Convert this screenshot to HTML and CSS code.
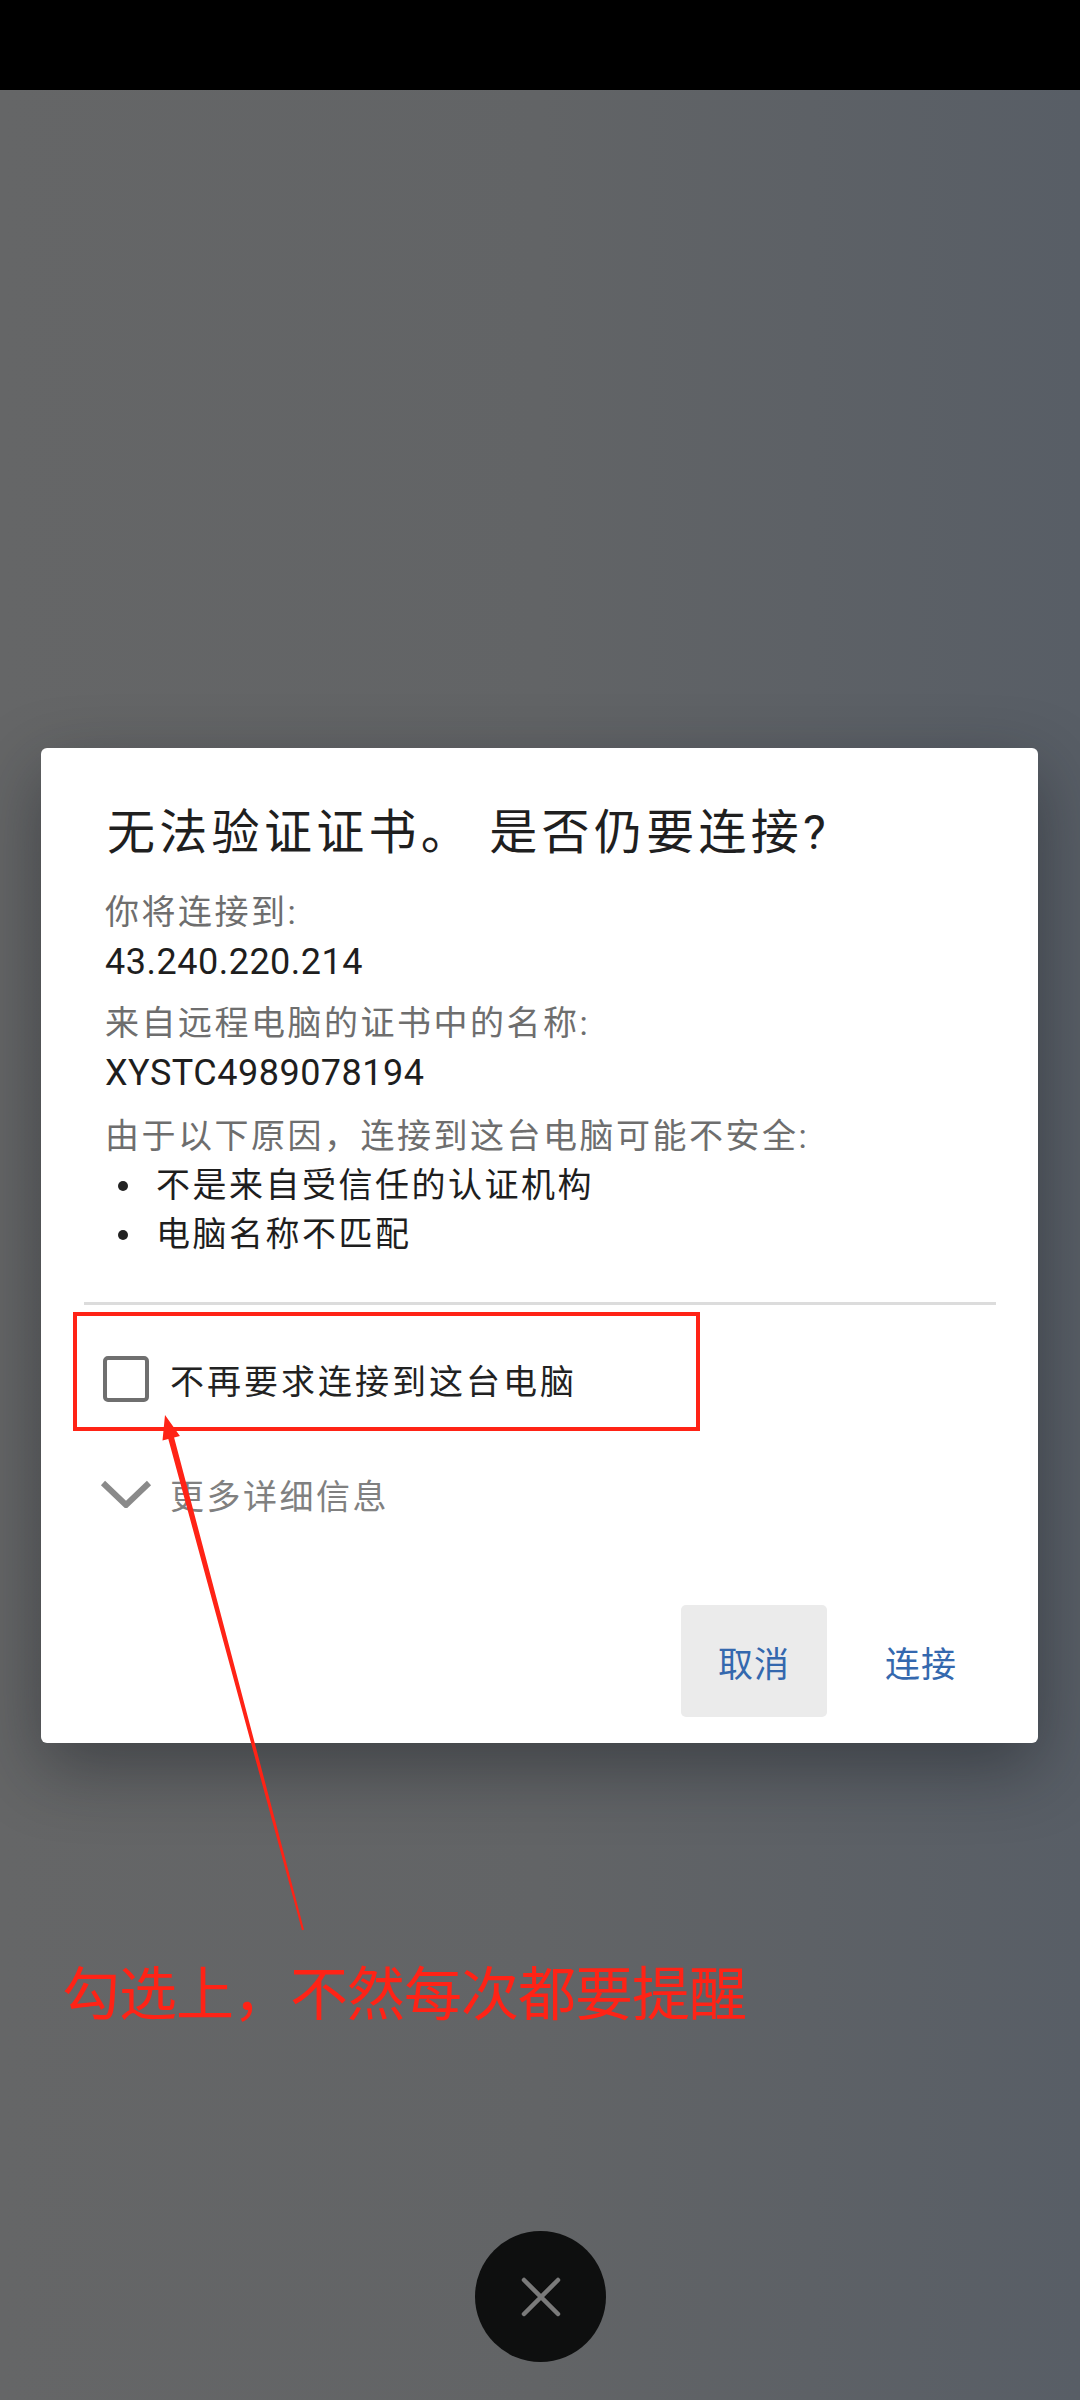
FILE: index.html
```html
<!DOCTYPE html>
<html lang="zh-CN">
<head>
<meta charset="utf-8">
<title>证书验证</title>
<link rel="stylesheet" href="styles.css">
</head>
<body>
<div class="phone">
  <div class="statusbar"></div>
  <main class="screen">
    <section class="dialog">
      <h1 class="title">无法验证证书。 是否仍要连接?</h1>
      <div class="body">
        <p class="label">你将连接到:</p>
        <p class="value">43.240.220.214</p>
        <p class="label gap-a">来自远程电脑的证书中的名称:</p>
        <p class="value">XYSTC4989078194</p>
        <p class="label gap-b">由于以下原因，连接到这台电脑可能不安全:</p>
        <ul class="reasons">
          <li>不是来自受信任的认证机构</li>
          <li>电脑名称不匹配</li>
        </ul>
      </div>
      <hr class="divider">
      <div class="check-row">
        <span class="checkbox"></span>
        <span class="check-text">不再要求连接到这台电脑</span>
      </div>
      <div class="more-row">
        <svg class="chevron" width="52" height="28" viewBox="0 0 52 28"><path d="M3 3 L26 25 L49 3" fill="none" stroke="#8a8a8a" stroke-width="6"/></svg>
        <span class="more-text">更多详细信息</span>
      </div>
      <div class="actions">
        <button class="btn cancel">取消</button>
        <button class="btn">连接</button>
      </div>
    </section>
  </main>

  <div class="annot-box"></div>
  <svg class="annot-arrow" width="1080" height="2400" viewBox="0 0 1080 2400">
    <polygon fill="#ff2316" points="165,1415 179.9,1435.9 174.1,1437.4 304,1929.7 302,1930.3 168.3,1439 162.5,1440.5"/>
  </svg>
  <div class="annot-text">勾选上，不然每次都要提醒</div>

  <button class="close-fab" aria-label="关闭">
    <svg width="40" height="40" viewBox="0 0 40 40"><path d="M3 3 L37 37 M37 3 L3 37" stroke="#7a7a7a" stroke-width="4.5" stroke-linecap="round"/></svg>
  </button>
</div>
</body>
</html>
```

FILE: styles.css
```css
* { box-sizing: border-box; }
html, body { margin: 0; padding: 0; }
body {
  width: 1080px;
  height: 2400px;
  overflow: hidden;
  font-family: Roboto, "Noto Sans CJK SC", sans-serif;
}
.phone {
  position: relative;
  width: 1080px;
  height: 2400px;
  background: linear-gradient(to right, #656667 0%, #626466 50%, #585e66 100%);
}
.statusbar {
  height: 90px;
  background: #000;
}
.screen {
  padding: 658px 42px 0 41px;
}
.dialog {
  background: #fff;
  border-radius: 6px;
  height: 995px;
  box-shadow: 0 24px 70px rgba(20, 24, 30, 0.45);
  display: flex;
  flex-direction: column;
  padding-top: 55px;
}
.title {
  margin: 0 0 24px 0;
  padding-left: 66px;
  font-size: 48px;
  line-height: 60px;
  font-weight: 400;
  letter-spacing: 4.3px;
  color: #1f1f1f;
  white-space: nowrap;
}
.body {
  padding-left: 64px;
}
.body p {
  margin: 0;
  font-size: 34px;
  line-height: 50px;
  letter-spacing: 2.5px;
}
.label { color: #6e6e6e; }
.value { color: #1e1e1e; font-size: 36px !important; letter-spacing: 0.5px !important; }
.gap-a { margin-top: 11px !important; }
.gap-b { margin-top: 13px !important; }
.reasons {
  list-style: none;
  margin: 0;
  padding: 0;
}
.reasons li {
  display: flex;
  align-items: center;
  font-size: 34px;
  line-height: 49px;
  letter-spacing: 2.5px;
  color: #1e1e1e;
}
.reasons li::before {
  content: "";
  width: 10px;
  height: 10px;
  border-radius: 50%;
  background: #222;
  margin-left: 13px;
  margin-right: 28px;
  flex: none;
}
.divider {
  border: 0;
  height: 3px;
  background: #dcdcdc;
  margin: 43px 42px 0 43px;
}
.check-row {
  margin-top: 24px;
  height: 100px;
  display: flex;
  align-items: center;
  padding-left: 62px;
}
.checkbox {
  width: 46px;
  height: 46px;
  border: 4.5px solid #6f6f6f;
  border-radius: 5px;
  flex: none;
  margin-right: 21px;
}
.check-text {
  font-size: 34px;
  letter-spacing: 3px;
  color: #222;
}
.more-row {
  margin-top: 15px;
  height: 100px;
  display: flex;
  align-items: center;
  padding-left: 59px;
}
.chevron {
  flex: none;
  margin-right: 18px;
}
.more-text {
  font-size: 34px;
  letter-spacing: 2.5px;
  color: #808080;
}
.actions {
  margin-top: 61px;
  display: flex;
  justify-content: flex-end;
  gap: 21px;
  padding-right: 44px;
}
.btn {
  height: 112px;
  padding: 0 37px;
  border: 0;
  border-radius: 5px;
  background: transparent;
  font-family: "Noto Sans CJK SC", sans-serif;
  font-size: 35px;
  letter-spacing: 1px;
  color: #3468ae;
}
.btn.cancel {
  background: #ebebeb;
}
.annot-box {
  position: absolute;
  left: 73px;
  top: 1312px;
  width: 627px;
  height: 119px;
  border: 4px solid #ff2316;
}
.annot-arrow {
  position: absolute;
  left: 0;
  top: 0;
  pointer-events: none;
}
.annot-text {
  position: absolute;
  left: 62px;
  top: 1955px;
  font-family: "Noto Sans CJK SC", sans-serif;
  font-size: 58px;
  line-height: 70px;
  letter-spacing: -1px;
  color: #ff2316;
  white-space: nowrap;
}
.close-fab {
  position: absolute;
  left: 475px;
  top: 2231px;
  width: 131px;
  height: 131px;
  border-radius: 50%;
  border: 0;
  background: #0e0f0f;
  display: flex;
  align-items: center;
  justify-content: center;
  padding: 0;
}
```
